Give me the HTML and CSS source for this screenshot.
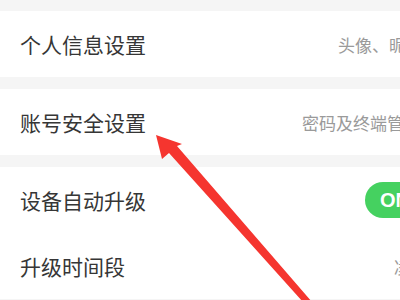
FILE: index.html
```html
<!DOCTYPE html>
<html lang="zh-CN">
<head>
<meta charset="utf-8">
<link rel="stylesheet" href="styles.css">
</head>
<body>
<div class="page">
  <section class="group">
    <div class="row">
      <span class="label">个人信息设置</span>
      <span class="value v1">头像、昵称、性别</span>
    </div>
  </section>
  <section class="group">
    <div class="row">
      <span class="label">账号安全设置</span>
      <span class="value v2">密码及终端管理</span>
    </div>
  </section>
  <section class="group">
    <div class="row">
      <span class="label">设备自动升级</span>
      <span class="toggle">ON</span>
    </div>
    <div class="row">
      <span class="label">升级时间段</span>
      <span class="value v3">凌晨2:00-5:00</span>
    </div>
  </section>
  <svg class="arrow" width="400" height="300" viewBox="0 0 400 300">
    <polygon points="156,135 162,159 169,153 303,302 312,302 177,146 182,144" fill="#f5352f"/>
  </svg>
</div>
</body>
</html>
```

FILE: styles.css
```css
html, body {
  margin: 0;
  padding: 0;
}
body {
  width: 400px;
  height: 300px;
  overflow: hidden;
  background: #f5f5f5;
  font-family: "Noto Sans CJK SC", "Noto Sans", sans-serif;
}
.page {
  position: relative;
  width: 400px;
  height: 300px;
  overflow: hidden;
  padding-top: 11px;
  box-sizing: border-box;
}
.group {
  background: #fff;
  margin-bottom: 12px;
}
.group + .group + .group {
  margin-top: 1px;
}
.row {
  height: 66px;
  display: flex;
  align-items: center;
  padding-left: 20px;
  white-space: nowrap;
  position: relative;
}
.label {
  font-size: 21px;
  color: #363636;
  flex: none;
}
.value {
  font-size: 17px;
  color: #9a9a9a;
  position: absolute;
}
.v1 { left: 338px; }
.v2 { left: 302px; }
.v3 { left: 394px; }
.toggle {
  position: absolute;
  left: 365px;
  top: 15px;
  width: 80px;
  height: 36px;
  border-radius: 18px;
  background: #45d160;
  color: #fff;
  font-family: "Liberation Sans", Arial, sans-serif;
  font-weight: bold;
  font-size: 20px;
  line-height: 36px;
  padding-left: 15px;
  box-sizing: border-box;
}
.arrow {
  position: absolute;
  left: 0;
  top: 0;
}
```
